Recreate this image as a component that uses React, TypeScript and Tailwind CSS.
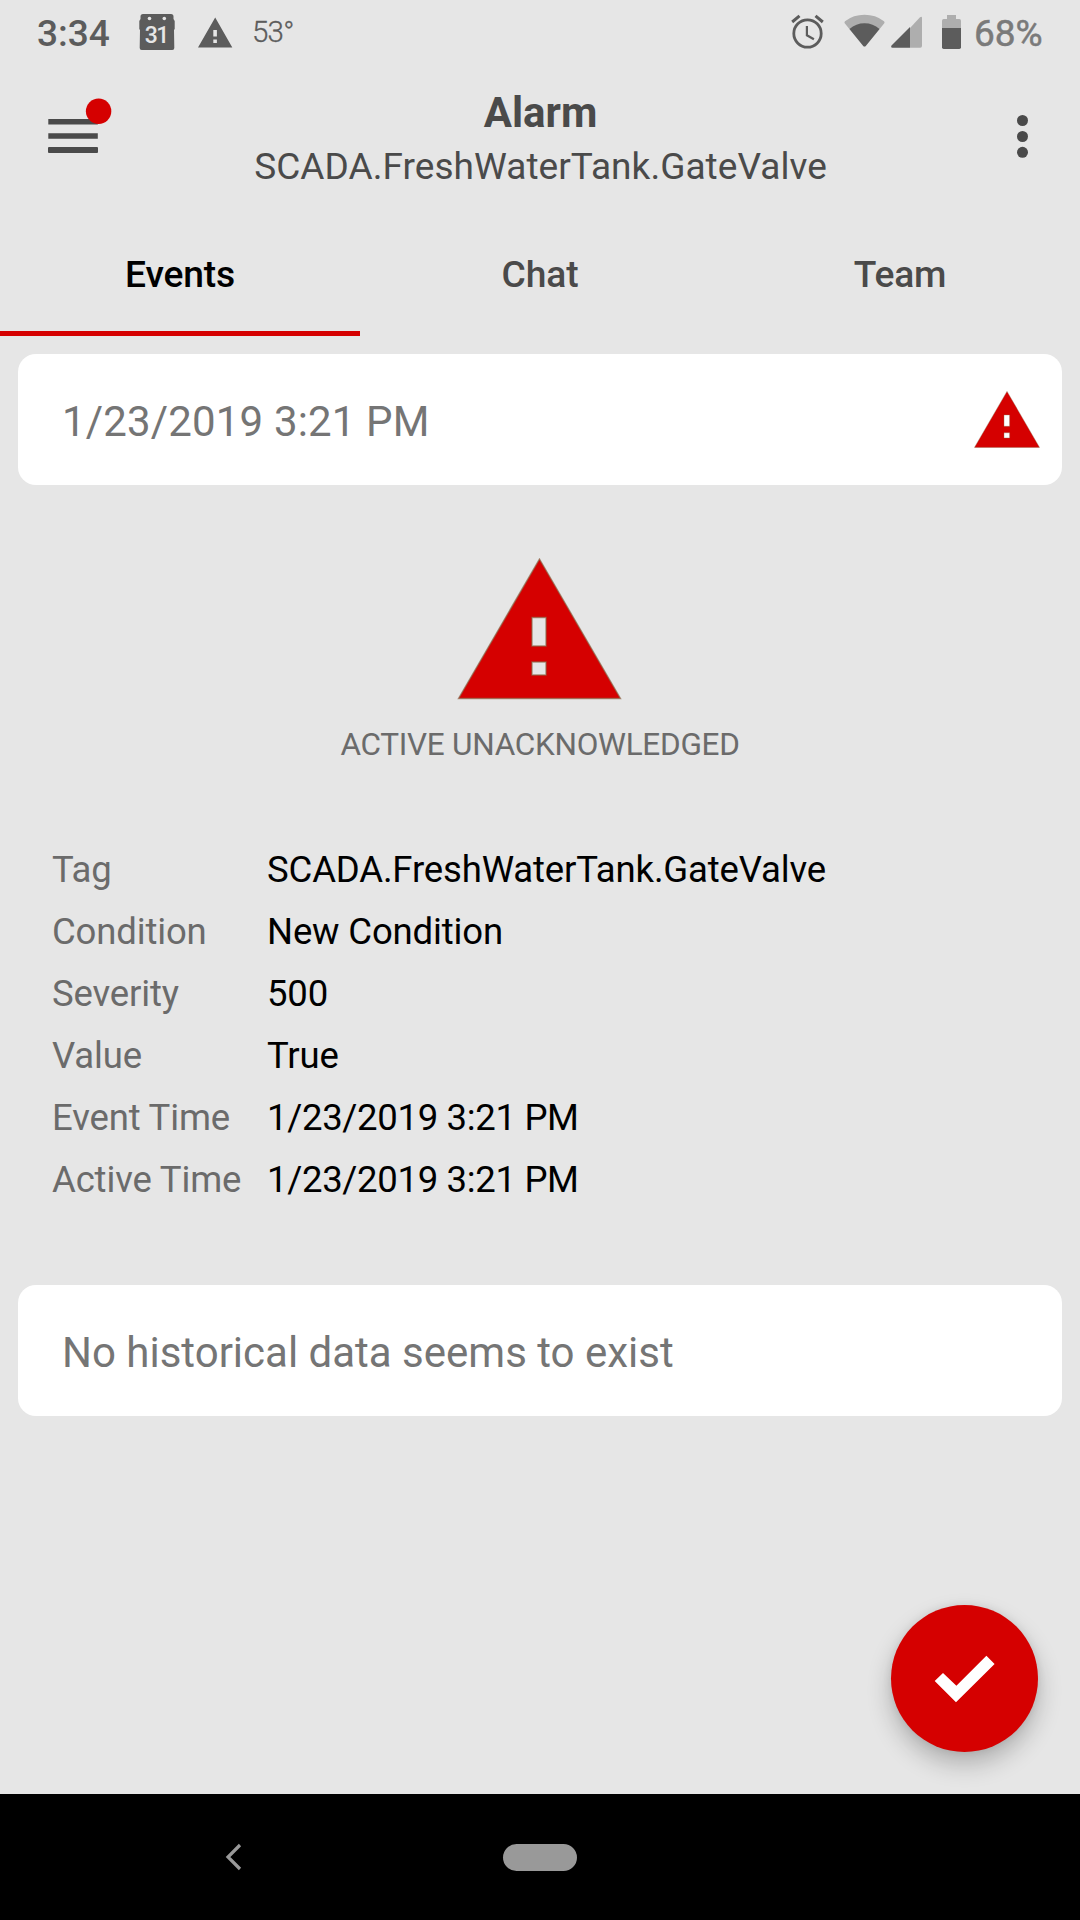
type Detail = {
  label: string;
  value: string;
};

const tabs = ["Events", "Chat", "Team"];

const details: Detail[] = [
  { label: "Tag", value: "SCADA.FreshWaterTank.GateValve" },
  { label: "Condition", value: "New Condition" },
  { label: "Severity", value: "500" },
  { label: "Value", value: "True" },
  { label: "Event Time", value: "1/23/2019 3:21 PM" },
  { label: "Active Time", value: "1/23/2019 3:21 PM" },
];

function AlertTriangle({ className }: { className: string }) {
  return (
    <svg viewBox="0 0 164 142" className={className}>
      <path
        fillRule="evenodd"
        d="M82 1 163 140.5H1ZM74.5 59.5v28.5h14v-28.5ZM74.5 104v13h14V104Z"
        fill="#d50000"
        stroke="#8a6a4c"
        strokeOpacity="0.7"
        strokeWidth="1.4"
      />
    </svg>
  );
}

function StatusBar() {
  return (
    <div className="flex h-[66px] items-center px-[37px] text-[#5c5c5c]">
      <span className="w-[73px] text-[37px] font-medium leading-none">3:34</span>

      <svg viewBox="0 0 36 38" className="ml-[29px] mb-[3px] h-[38px] w-9">
        <path
          d="M4 1h28q2.5 0 2.5 2.5V6l1.2 2v8l-.7 1 .3 18q0 2-2 2H2.7q-2 0-2-2L1 17 .3 16V8l1.2-2V3.5Q1.5 1 4 1Z"
          fill="currentColor"
        />
        <circle cx="10.5" cy="5.5" r="1.8" fill="#e6e6e6" />
        <circle cx="25.3" cy="5.5" r="1.8" fill="#e6e6e6" />
        <text x="17.3" y="30" textAnchor="middle" fontSize="23" fontWeight="500" letterSpacing="-1.5" fill="#e6e6e6">
          31
        </text>
      </svg>
      <svg viewBox="0 0 35 31" className="ml-[23px] mb-[2px] h-[31px] w-[35px]">
        <path fillRule="evenodd" d="M17.2.5 34.3 30.5H0ZM15.3 13v6.5h3.6V13ZM15.3 22.5V26h3.6v-3.5Z" fill="currentColor" />
      </svg>
      <span className="ml-[19px] pb-px text-[29.5px] font-light leading-none tracking-[-0.8px] [-webkit-text-stroke:0.3px_#5c5c5c]">53°</span>

      <div className="ml-auto flex items-center">
        <svg viewBox="0 0 33 36" className="mb-[3px] h-9 w-[33px]" fill="none" stroke="currentColor">
          <circle cx="16.5" cy="19.5" r="13.7" strokeWidth="2.8" />
          <path d="M15.9 12v9.3l7 4" strokeWidth="2.2" />
          <path d="M1.2 8 8.5 1.8M31.8 8 24.5 1.8" strokeWidth="3" />
        </svg>
        <svg viewBox="0 0 41 33" className="ml-5 mb-[5px] h-[33px] w-[41px]">
          <path d="M20.5 32.5q-1 0-2-1.5L.7 9.3Q0 8 1 7.2 9.500.8 20.5.8T40 7.2q1 .8.3 2.1L22.5 31q-1 1.5-2 1.5Z" fill="#aeaeae" />
          <path d="M20.5 32.5q-1 0-2-1.5L5.5 15Q12 9.2 20.5 9.2T35.5 15L22.5 31q-1 1.5-2 1.5Z" fill="currentColor" />
        </svg>
        <svg viewBox="0 0 32 32" className="ml-1.5 mb-[3px] h-8 w-8">
          <path d="M19 12 29 1.3Q31 0 31 2v28q0 1.7-1.7 1.7H19Z" fill="#aeaeae" />
          <path d="M19 11v20.7H1.5Q-.5 31.5.5 29.5Z" fill="currentColor" />
        </svg>
        <svg viewBox="0 0 21 34" className="ml-[18px] mb-[3px] h-[34px] w-[21px]">
          <path d="M6 0h9v4h3.3Q20 4 20 5.7V13H1V5.7Q1 4 2.7 4H6Z" fill="#aeaeae" />
          <path d="M1 13h19v19.3Q20 34 18.3 34H2.7Q1 34 1 32.3Z" fill="currentColor" />
        </svg>
        <span className="ml-3 w-[69px] text-[37px] leading-none text-[#7a7a7a] [-webkit-text-stroke:0.5px_#7a7a7a]">68%</span>
      </div>
    </div>
  );
}

function Header() {
  return (
    <header className="flex h-[132px] justify-between text-[#4a4a4a]">
      <svg viewBox="0 0 120 132" className="h-[132px] w-[120px]">
        <path d="M48.3 53h49.5v5.5H48.3ZM48.3 67.2h49.5v5.6H48.3Z" fill="currentColor" />
        <rect x="48" y="81" width="50" height="6" rx="1" fill="currentColor" />
        <circle cx="98.6" cy="45.2" r="12.7" fill="#d50000" />
      </svg>
      <div className="pl-px pt-[22px] text-center leading-[50px]">
        <h1 className="text-[42px] font-bold">Alarm</h1>
        <p className="mt-1 text-[37px] tracking-[0.05px]">SCADA.FreshWaterTank.GateValve</p>
      </div>
      <svg viewBox="0 0 120 132" className="h-[132px] w-[120px]" fill="currentColor">
        <circle cx="62.5" cy="54.5" r="5.5" />
        <circle cx="62.5" cy="70.5" r="5.5" />
        <circle cx="62.5" cy="86.3" r="5.5" />
      </svg>
    </header>
  );
}

export default function App() {
  const activeTab = "Events";

  return (
    <div className="relative flex h-[1920px] w-[1080px] flex-col overflow-hidden bg-[#e6e6e6] font-['Roboto',sans-serif]">
      <StatusBar />
      <Header />

      <nav className="grid h-[138px] grid-cols-3">
        {tabs.map((tab) => (
          <button
            key={tab}
            className={
              tab === activeTab
                ? "border-b-[5px] border-[#d50000] pt-[21px] text-[37.2px] font-medium tracking-[-0.15px] text-black"
                : "border-b-[5px] border-transparent pt-[21px] text-[37.2px] font-medium tracking-[-0.15px] text-[#4a4a4a]"
            }
          >
            {tab}
          </button>
        ))}
      </nav>

      <main className="flex flex-1 flex-col px-[18px] pt-[18px]">
        <div className="flex h-[131px] items-center justify-between rounded-[18px] bg-white pl-[44px] pr-[22px]">
          <span className="pt-1 text-[42px] tracking-[0.16px] text-[#757575]">1/23/2019 3:21 PM</span>
          <AlertTriangle className="h-[57px] w-[66px]" />
        </div>

        <section className="flex flex-col items-center pt-[73px]">
          <AlertTriangle className="mr-px h-[142px] w-[165px]" />
          <p className="mt-[25px] text-[31.5px] leading-[40px] tracking-[-0.28px] text-[#6b6b6b]">ACTIVE UNACKNOWLEDGED</p>
        </section>

        <dl className="mt-[74px] grid auto-rows-[62px] grid-cols-[215px_1fr] pl-[34px] text-[36.5px] leading-[62px] tracking-[-0.15px]">
          {details.map(({ label, value }) => (
            <div key={label} className="contents">
              <dt className="text-[#6b6b6b]">{label}</dt>
              <dd className={label.endsWith("Time") ? "tracking-[-0.32px] text-black" : "text-black"}>{value}</dd>
            </div>
          ))}
        </dl>

        <div className="mt-[74px] flex h-[131px] items-center rounded-[18px] bg-white pl-[44px]">
          <span className="pt-1 text-[42px] text-[#757575]">No historical data seems to exist</span>
        </div>
      </main>

      <button className="absolute bottom-[168px] right-[42px] h-[147px] w-[147px] rounded-full bg-[#d50000] shadow-[0_12px_24px_rgba(0,0,0,0.24),0_0_8px_rgba(0,0,0,0.08)]">
        <svg viewBox="0 0 147 147" className="h-[147px] w-[147px]">
          <path d="m43.7 76 8.3-8 13.4 12.7 30-30L103.6 59 65 97.3Z" fill="white" />
        </svg>
      </button>

      <footer className="relative flex h-[126px] items-center bg-black">
        <svg viewBox="0 0 18 28" className="ml-[225px] h-7 w-[18px]">
          <path d="M15 2 3 14l12 12" fill="none" stroke="#999999" strokeWidth="3.2" />
        </svg>
        <div className="ml-[260px] h-[27px] w-[74px] rounded-full bg-[#999999]" />
      </footer>
    </div>
  );
}
